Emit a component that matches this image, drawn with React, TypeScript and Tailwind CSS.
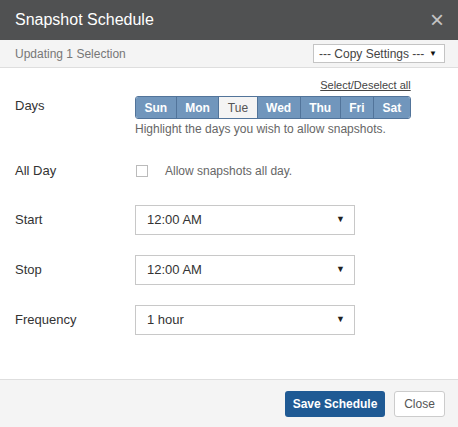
import React, { useState } from "react";

const DAYS = ["Sun", "Mon", "Tue", "Wed", "Thu", "Fri", "Sat"];

function SelectBox({ value }: { value: string }) {
  return (
    <div className="flex h-[30px] w-[220px] items-center justify-between border border-[#c8c8c8] bg-white pl-[11px] pr-[9px] text-[13px] text-[#333]">
      <span>{value}</span>
      <span className="text-[9px] text-[#222]">▼</span>
    </div>
  );
}

export default function App() {
  const [active, setActive] = useState<string[]>(["Sun", "Mon", "Wed", "Thu", "Fri", "Sat"]);

  const toggle = (d: string) =>
    setActive((prev) => (prev.includes(d) ? prev.filter((x) => x !== d) : [...prev, d]));

  return (
    <div className="flex h-[427px] w-[458px] flex-col bg-white font-['Liberation_Sans',Arial,sans-serif]">
      {/* header */}
      <div className="flex h-[40px] shrink-0 items-center justify-between bg-[#505152] pl-[15px] pr-[14px]">
        <h1 className="text-[16px] text-white">Snapshot Schedule</h1>
        <span className="text-[24px] leading-none text-[#c4c4c4]">×</span>
      </div>

      {/* sub header */}
      <div className="flex h-[28px] shrink-0 items-center justify-between border-b border-[#dedede] bg-[#f4f4f4] pl-[15px] pr-[13px]">
        <span className="text-[12px] text-[#777]">Updating 1 Selection</span>
        <div className="flex h-[19px] w-[132px] items-center justify-between border border-[#c4c4c4] bg-white pl-[5px] pr-[7px] text-[12px] text-[#444]">
          <span>--- Copy Settings ---</span>
          <span className="text-[8px] text-[#111]">▼</span>
        </div>
      </div>

      {/* body */}
      <div className="flex-1 px-[15px] text-[13px] text-[#333]">
        <div className="flex pt-[10px]">
          <div className="w-[120px] pt-[20px] leading-[16px]">Days</div>
          <div>
            <div className="h-[14px] text-right text-[11px] leading-[14px] text-[#444] underline">
              Select/Deselect all
            </div>
            <div className="mt-[4px] flex h-[23px] w-fit overflow-hidden rounded-[3px] border border-[#52749a]">
              {DAYS.map((d, i) => {
                const on = active.includes(d);
                return (
                  <button
                    key={d}
                    onClick={() => toggle(d)}
                    className={`flex items-center justify-center px-[8.5px] text-[12px] ${
                      i > 0 ? "border-l border-[#52749a]" : ""
                    } ${on ? "bg-[#7196bc] font-bold text-white" : "bg-[#f4f4f4] text-[#555]"}`}
                  >
                    {d}
                  </button>
                );
              })}
            </div>
            <div className="mt-[2px] text-[12px] leading-[16px] text-[#666]">
              Highlight the days you wish to allow snapshots.
            </div>
          </div>
        </div>

        <div className="mt-[25px] flex items-center">
          <div className="w-[120px] leading-[16px]">All Day</div>
          <div className="flex items-center">
            <span className="ml-[1px] h-[12px] w-[12px] border border-[#bbb] bg-white" />
            <span className="ml-[17px] text-[12px] text-[#666]">Allow snapshots all day.</span>
          </div>
        </div>

        <div className="mt-[25px] flex items-center">
          <div className="w-[120px]">Start</div>
          <SelectBox value="12:00 AM" />
        </div>
        <div className="mt-[20px] flex items-center">
          <div className="w-[120px]">Stop</div>
          <SelectBox value="12:00 AM" />
        </div>
        <div className="mt-[20px] flex items-center">
          <div className="w-[120px]">Frequency</div>
          <SelectBox value="1 hour" />
        </div>
      </div>

      {/* footer */}
      <div className="flex h-[48px] shrink-0 items-center justify-end gap-[9px] border-t border-[#dedede] bg-[#f4f4f4] pr-[13px]">
        <button className="h-[26px] w-[100px] rounded-[3px] bg-[#1f5a94] text-[12px] font-bold text-white">
          Save Schedule
        </button>
        <button className="h-[26px] w-[51px] rounded-[3px] border border-[#ccc] bg-white text-[12px] text-[#555]">
          Close
        </button>
      </div>
    </div>
  );
}
